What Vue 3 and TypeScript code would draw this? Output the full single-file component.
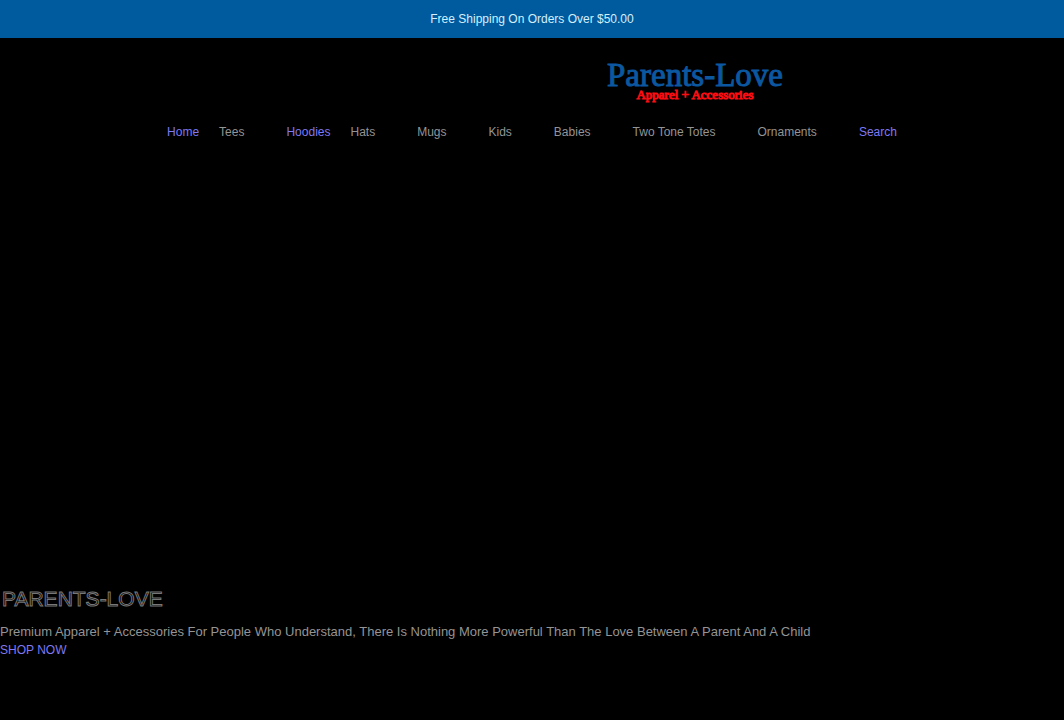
<script setup lang="ts">
interface NavItem {
  label: string
  link: boolean
}

const items: NavItem[] = [
  { label: 'Home', link: true },
  { label: 'Tees', link: false },
  { label: 'Hoodies', link: true },
  { label: 'Hats', link: false },
  { label: 'Mugs', link: false },
  { label: 'Kids', link: false },
  { label: 'Babies', link: false },
  { label: 'Two Tone Totes', link: false },
  { label: 'Ornaments', link: false },
  { label: 'Search', link: true },
]
</script>

<template>
  <div class="page">
    <p class="announcement">Free Shipping On Orders Over $50.00</p>
    <header class="header">
      <div class="brand-row">
        <a class="brand" href="#">
          <span class="brand-name">Parents-Love</span>
          <span class="brand-tag">Apparel + Accessories</span>
        </a>
      </div>
      <nav class="nav" aria-label="Main">
        <template v-for="item in items" :key="item.label">
          <a v-if="item.link" class="nav-link" href="#">{{ item.label }}</a>
          <button v-else class="nav-menu" type="button">{{ item.label }}</button>
        </template>
      </nav>
    </header>
    <main class="hero">
      <h1 class="title">PARENTS-LOVE</h1>
      <p class="lead">Premium Apparel + Accessories For People Who Understand, There Is Nothing More Powerful Than The Love Between A Parent And A Child</p>
      <a class="shop" href="#">SHOP NOW</a>
    </main>
  </div>
</template>

<style>
body {
  background: #000;
}
</style>

<style scoped>
.page {
  min-height: 100vh;
  background: #000;
  color: #949494;
  font-family: "Liberation Sans", Arial, sans-serif;
  font-size: 12px;
  line-height: 18px;
}

.announcement {
  margin: 0;
  padding: 10px 0;
  background: #005a9e;
  color: #d3f0ff;
  text-align: center;
}

.brand-row {
  display: flex;
  justify-content: center;
  padding: 22px 0 0 326px;
}

.brand {
  display: flex;
  flex-direction: column;
  align-items: center;
  text-decoration: none;
  font-family: "Liberation Serif", "Times New Roman", serif;
}

.brand-name {
  color: #0b57a0;
  font-size: 33px;
  line-height: 30px;
  -webkit-text-stroke: 1px #0b57a0;
}

.brand-tag {
  color: #fb0d12;
  font-size: 13px;
  line-height: 10px;
  -webkit-text-stroke: 1px #fb0d12;
}

.nav {
  display: flex;
  justify-content: center;
  padding-top: 23px;
}

.nav-link,
.nav-menu {
  padding: 0 10px;
  border: 0;
  background: none;
  color: inherit;
  font: inherit;
  white-space: nowrap;
}

.nav-menu {
  padding-right: 32px;
}

.nav-link,
.shop {
  color: #7f78f4;
  text-decoration: none;
}

.hero {
  padding-top: 446px;
}

.title {
  margin: 0;
  padding-left: 2px;
  color: #000;
  font-size: 21px;
  font-weight: 400;
  line-height: 24px;
  -webkit-text-stroke: 1px #777;
}

.lead {
  margin: 12px 0 0;
  font-size: 13px;
}

.shop {
  display: inline-block;
}
</style>
